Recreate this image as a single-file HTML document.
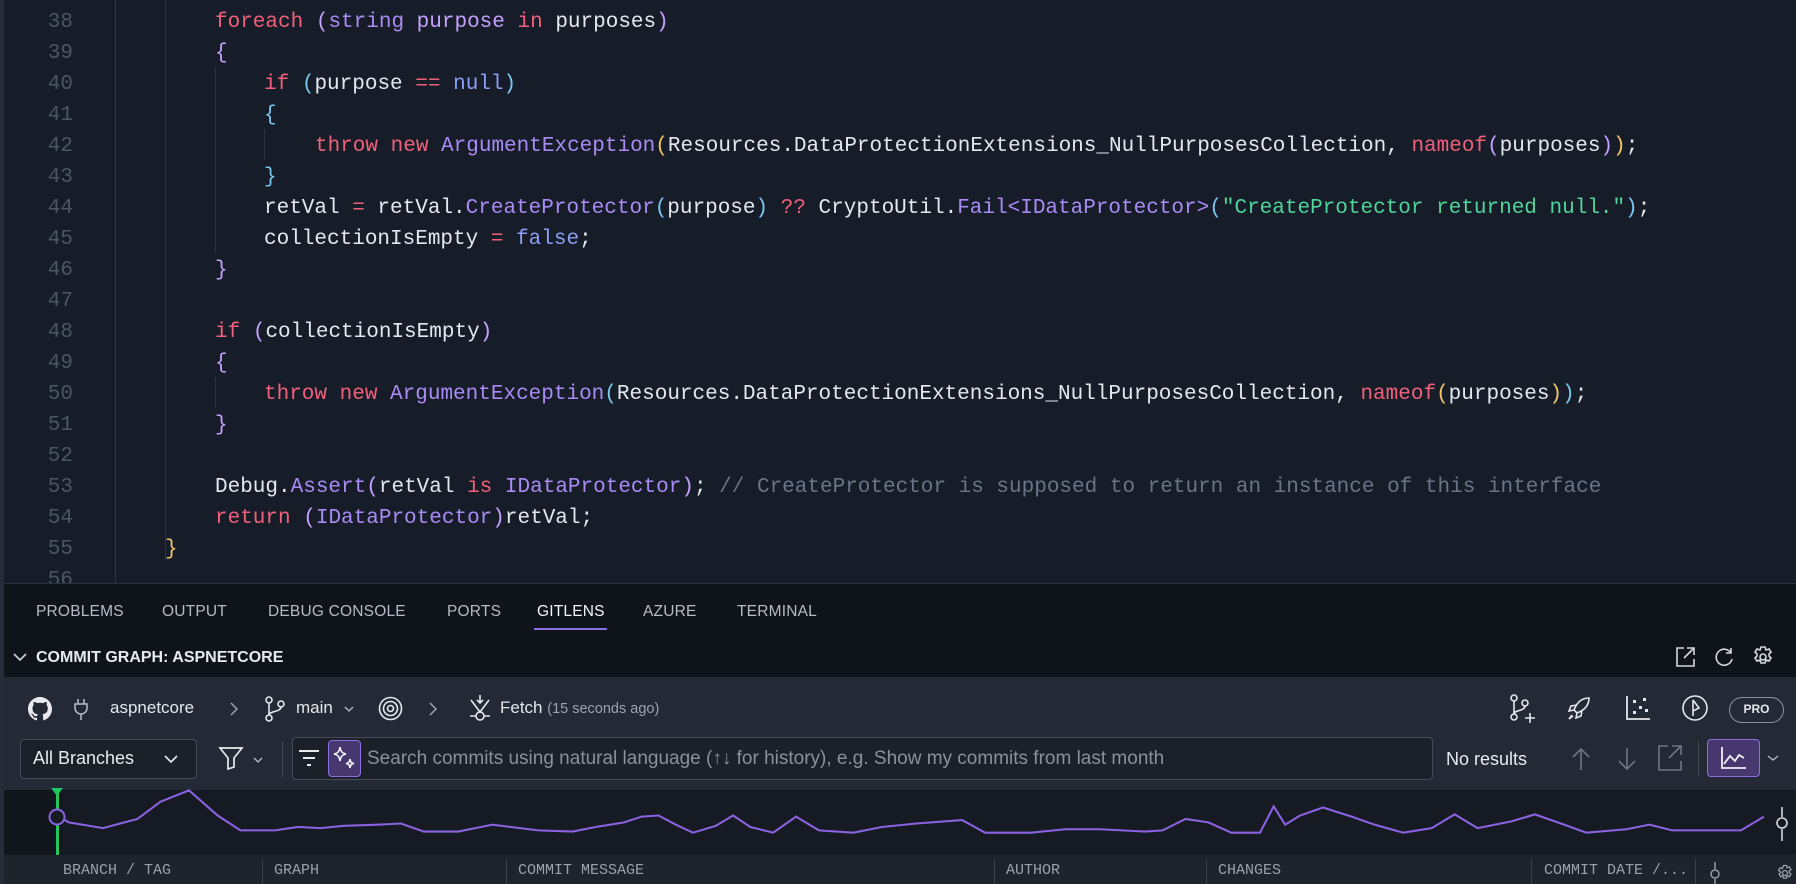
<!DOCTYPE html>
<html><head><meta charset="utf-8"><style>
*{margin:0;padding:0;box-sizing:border-box}
body{width:1796px;height:884px;overflow:hidden;background:#161d28;font-family:"Liberation Sans",sans-serif;position:relative;color:#d4d8e0}
.ed{position:absolute;left:0;top:0;width:1796px;height:584px;background:#161d28;border-left:4px solid #262d38;overflow:hidden}
.ln{position:absolute;left:0;width:73px;text-align:right;font-family:"Liberation Mono",monospace;font-size:21px;color:#4a5566;line-height:31px}
.cd{position:absolute;left:0;font-family:"Liberation Mono",monospace;font-size:21px;line-height:31px;white-space:pre;color:#e4e7ee}
.vl{position:absolute;width:1px;background:#2c3442}
.k{color:#f0607a}.f{color:#a98bf5}.p{color:#c4a0ff}.b{color:#7ac7f0}.n{color:#8c9ff5}.s{color:#4fd49a}.c{color:#6a7487}.y{color:#f2c468}.t{color:#a98bf5}
.abs{position:absolute}
.tab{position:absolute;top:603px;font-size:15.5px;color:#b6bcc6;letter-spacing:0.2px}
svg{overflow:visible}
</style></head><body>
<div class="ed">
<div class="vl" style="left:111px;top:0;height:584px"></div>
<div class="vl" style="left:161px;top:0;height:560px"></div>
<div class="vl" style="left:211px;top:67px;height:186px"></div>
<div class="vl" style="left:260px;top:129px;height:31px"></div>
<div class="vl" style="left:211px;top:377px;height:31px"></div>
</div>
<div id="lines"></div>
<script>
var L=[
["38",'<span class="k">foreach</span> <span class="p">(</span><span class="t">string</span> <span class="p">purpose</span> <span class="k">in</span> purposes<span class="p">)</span>',215],
["39",'<span class="p">{</span>',215],
["40",'<span class="k">if</span> <span class="b">(</span>purpose <span class="k">==</span> <span class="n">null</span><span class="b">)</span>',264],
["41",'<span class="b">{</span>',264],
["42",'<span class="k">throw</span> <span class="k">new</span> <span class="f">ArgumentException</span><span class="y">(</span>Resources.DataProtectionExtensions_NullPurposesCollection, <span class="k">nameof</span><span class="p">(</span>purposes<span class="p">)</span><span class="y">)</span>;',315],
["43",'<span class="b">}</span>',264],
["44",'retVal <span class="k">=</span> retVal.<span class="f">CreateProtector</span><span class="b">(</span>purpose<span class="b">)</span> <span class="k">??</span> CryptoUtil.<span class="f">Fail</span><span class="f">&lt;IDataProtector&gt;</span><span class="b">(</span><span class="s">"CreateProtector returned null."</span><span class="b">)</span>;',264],
["45",'collectionIsEmpty <span class="k">=</span> <span class="n">false</span>;',264],
["46",'<span class="p">}</span>',215],
["47",'',215],
["48",'<span class="k">if</span> <span class="p">(</span>collectionIsEmpty<span class="p">)</span>',215],
["49",'<span class="p">{</span>',215],
["50",'<span class="k">throw</span> <span class="k">new</span> <span class="f">ArgumentException</span><span class="b">(</span>Resources.DataProtectionExtensions_NullPurposesCollection, <span class="k">nameof</span><span class="y">(</span>purposes<span class="y">)</span><span class="b">)</span>;',264],
["51",'<span class="p">}</span>',215],
["52",'',215],
["53",'Debug.<span class="f">Assert</span><span class="p">(</span>retVal <span class="k">is</span> <span class="f">IDataProtector</span><span class="p">)</span>; <span class="c">// CreateProtector is supposed to return an instance of this interface</span>',215],
["54",'<span class="k">return</span> <span class="p">(</span><span class="f">IDataProtector</span><span class="p">)</span>retVal;',215],
["55",'<span class="y">}</span>',165],
["56",'',215]];
var h='';
L.forEach(function(l,i){var t=7+i*31;
h+='<div class="ln" style="top:'+t+'px">'+l[0]+'</div><div class="cd" style="top:'+t+'px;left:'+l[2]+'px">'+l[1]+'</div>';});
document.getElementById('lines').innerHTML=h;
</script>
<div class="abs" style="left:0;top:583px;width:1796px;height:301px;background:#0f141b;border-top:1px solid #2a313c;border-left:4px solid #262d38"></div>
<div class="tab" style="left:36px">PROBLEMS</div>
<div class="tab" style="left:162px">OUTPUT</div>
<div class="tab" style="left:268px">DEBUG CONSOLE</div>
<div class="tab" style="left:447px">PORTS</div>
<div class="tab" style="left:537px;color:#f2f4f7">GITLENS</div>
<div class="abs" style="left:534px;top:628px;width:73px;height:2px;background:#8b6fe0"></div>
<div class="tab" style="left:643px">AZURE</div>
<div class="tab" style="left:737px">TERMINAL</div>
<svg class="abs" style="left:12px;top:651px" width="16" height="12"><path d="M2 3l6 6 6-6" stroke="#d0d4dc" stroke-width="1.6" fill="none"/></svg>
<div class="abs" style="left:36px;top:649px;font-size:16px;font-weight:bold;color:#e8eaef">COMMIT GRAPH: ASPNETCORE</div>
<svg class="abs" style="left:1673px;top:645px" width="24" height="24" fill="none" stroke="#d4d8df" stroke-width="1.6"><path d="M11 3H4v18h17v-7M14 3h7v7M21 3l-10 10"/></svg>
<svg class="abs" style="left:1712px;top:645px" width="24" height="24" fill="none" stroke="#d4d8df" stroke-width="1.6"><path d="M19 8A8 8 0 1 0 20 14M19 3v5h-5"/></svg>
<svg class="abs" style="left:1751px;top:645px" width="24" height="24" fill="none" stroke="#d4d8df" stroke-width="1.6"><circle cx="12" cy="12" r="3"/><path d="M10 2h4l1 3 3-1 2 3-2 2 0 2 2 2-2 3-3-1-1 3h-4l-1-3-3 1-2-3 2-2v-2l-2-2 2-3 3 1z"/></svg>
<div class="abs" style="left:4px;top:677px;width:1792px;height:113px;background:#242a35"></div>
<svg class="abs" style="left:28px;top:697px" width="24" height="24" viewBox="0 0 16 16"><path fill="#e8eaef" d="M8 0C3.6 0 0 3.6 0 8c0 3.5 2.3 6.5 5.5 7.6.4.1.5-.2.5-.4v-1.4c-2.2.5-2.7-1-2.7-1-.4-.9-.9-1.2-.9-1.2-.7-.5.1-.5.1-.5.8.1 1.2.8 1.2.8.7 1.3 1.900.9 2.4.7.1-.5.3-.9.5-1.100-1.800-.2-3.600-.9-3.600-4 0-.9.3-1.600.8-2.100-.1-.2-.4-1 .1-2.100 0 0 .7-.2 2.200.8.6-.2 1.300-.3 2-.3s1.400.1 2 .3c1.500-1 2.200-.8 2.200-.8.4 1.100.2 1.900.1 2.100.5.6.8 1.300.8 2.100 0 3.100-1.900 3.700-3.600 3.900.3.3.5.8.5 1.500v2.200c0 .2.1.5.6.4C13.700 14.500 16 11.500 16 8c0-4.400-3.600-8-8-8z"/></svg>
<svg class="abs" style="left:72px;top:697px" width="18" height="24" fill="none" stroke="#b8bec8" stroke-width="1.5"><path d="M6 2v5M12 2v5M3 7h12v4a6 6 0 0 1-12 0zM9 17v6"/></svg>
<div class="abs" style="left:110px;top:698px;font-size:17px;color:#e4e7ec">aspnetcore</div>
<svg class="abs" style="left:228px;top:700px" width="12" height="18" fill="none" stroke="#9aa1ad" stroke-width="1.5"><path d="M3 3l6 6-6 6"/></svg>
<svg class="abs" style="left:264px;top:695px" width="22" height="28" fill="none" stroke="#e4e7ec" stroke-width="1.6"><circle cx="5" cy="5" r="3"/><circle cx="5" cy="23" r="3"/><circle cx="17" cy="9" r="3"/><path d="M5 8v12M17 12c0 5-12 4-12 8"/></svg>
<div class="abs" style="left:296px;top:698px;font-size:17px;color:#e4e7ec">main</div>
<svg class="abs" style="left:343px;top:705px" width="12" height="8" fill="none" stroke="#b8bec8" stroke-width="1.3"><path d="M2 2l4 4 4-4"/></svg>
<svg class="abs" style="left:378px;top:696px" width="25" height="25" fill="none" stroke="#e4e7ec" stroke-width="1.6"><circle cx="12.5" cy="12.5" r="11"/><circle cx="12.5" cy="12.5" r="7"/><circle cx="12.5" cy="12.5" r="3"/></svg>
<svg class="abs" style="left:427px;top:700px" width="12" height="18" fill="none" stroke="#9aa1ad" stroke-width="1.5"><path d="M3 3l6 6-6 6"/></svg>
<svg class="abs" style="left:467px;top:694px" width="26" height="28" fill="none" stroke="#e4e7ec" stroke-width="1.6"><path d="M13 1v8M10 6l3 3 3-3M4 6l9 12 9-12"/><circle cx="13" cy="22" r="4"/><path d="M3 22h6M17 22h6"/></svg>
<div class="abs" style="left:500px;top:698px;font-size:17px;color:#e4e7ec">Fetch <span style="font-size:14.5px;color:#9ba2ae">(15 seconds ago)</span></div>
<svg class="abs" style="left:1509px;top:694px" width="28" height="30" fill="none" stroke="#e4e7ec" stroke-width="1.6"><circle cx="5" cy="4" r="3"/><circle cx="5" cy="23" r="3"/><circle cx="16" cy="9" r="3"/><path d="M5 7v13M16 12c0 5-11 4-11 8M21 19v10M16 24h10"/></svg>
<svg class="abs" style="left:1566px;top:696px" width="25" height="25" fill="none" stroke="#e4e7ec" stroke-width="1.6"><path d="M23 2c-7 0-12 4-15 12l3 3c8-3 12-8 12-15zM8 14l-5 1 2-5 6-1M11 17l-1 5 5-2 1-6M6 19l-3 4 4-3"/></svg>
<svg class="abs" style="left:1625px;top:695px" width="26" height="26" fill="#e4e7ec"><path d="M2 1v23h23" stroke="#e4e7ec" stroke-width="1.8" fill="none"/><rect x="8" y="5" width="3" height="3"/><rect x="18" y="3" width="3" height="3"/><rect x="14" y="11" width="3" height="3"/><rect x="20" y="14" width="3" height="3"/><rect x="8" y="16" width="3" height="3"/></svg>
<svg class="abs" style="left:1681px;top:694px" width="28" height="28" fill="none" stroke="#e4e7ec" stroke-width="1.6"><circle cx="14" cy="14" r="12"/><path d="M12 6v16M12 6l6 8-6 3"/></svg>
<div class="abs" style="left:1729px;top:697px;width:55px;height:26px;border:1.5px solid #8a919c;border-radius:13px;font-size:12px;font-weight:bold;color:#e4e7ec;text-align:center;line-height:23px">PRO</div>
<div class="abs" style="left:20px;top:739px;width:177px;height:40px;border:1.5px solid #454c58;border-radius:4px;background:#1b2029;font-size:18px;color:#e8eaef;padding:8px 0 0 12px">All Branches</div>
<svg class="abs" style="left:163px;top:753px" width="16" height="12" fill="none" stroke="#e8eaef" stroke-width="1.6"><path d="M2 3l6 6 6-6"/></svg>
<svg class="abs" style="left:218px;top:746px" width="26" height="24" fill="none" stroke="#e8eaef" stroke-width="1.7"><path d="M2 2h22l-8 10v9l-6 2v-11z"/></svg>
<svg class="abs" style="left:253px;top:756px" width="11" height="8" fill="none" stroke="#b8bec8" stroke-width="1.3"><path d="M1 2l4 4 4-4"/></svg>
<div class="abs" style="left:282px;top:741px;width:1px;height:36px;background:#454c58"></div>
<div class="abs" style="left:292px;top:737px;width:1141px;height:43px;border:1.5px solid #454c58;border-radius:4px;background:#1b2029"></div>
<svg class="abs" style="left:298px;top:749px" width="22" height="18" stroke="#e8eaef" stroke-width="2"><path d="M1 2h20M5 9h12M9 16h4"/></svg>
<div class="abs" style="left:328px;top:740px;width:33px;height:37px;border:1.5px solid #8b6fe0;border-radius:4px;background:#46386e"></div>
<svg class="abs" style="left:331px;top:744px" width="28" height="30" fill="none" stroke="#f0f0f6" stroke-width="1.6"><path d="M9 3c1 5 2 6 6 7-4 1-5 2-6 7-1-5-2-6-6-7 4-1 5-2 6-7zM19 15c.5 3 1 4 4 4.5-3 .5-3.5 1.5-4 4.5-.5-3-1-4-4-4.5 3-.5 3.5-1.5 4-4.5z"/></svg>
<div class="abs" style="left:367px;top:748px;font-size:19px;color:#8a919c">Search commits using natural language (↑↓ for history), e.g. Show my commits from last month</div>
<div class="abs" style="left:1446px;top:749px;font-size:18px;color:#e8eaef">No results</div>
<svg class="abs" style="left:1571px;top:746px" width="20" height="26" fill="none" stroke="#6e7580" stroke-width="1.6"><path d="M10 24V3M2 11l8-8 8 8"/></svg>
<svg class="abs" style="left:1617px;top:746px" width="20" height="26" fill="none" stroke="#6e7580" stroke-width="1.6"><path d="M10 2v21M2 15l8 8 8-8"/></svg>
<svg class="abs" style="left:1657px;top:744px" width="26" height="28" fill="none" stroke="#6e7580" stroke-width="1.6"><path d="M11 2H2v24h22v-9M15 2h9v9M24 2L12 14"/></svg>
<div class="abs" style="left:1698px;top:742px;width:1px;height:34px;background:#454c58"></div>
<div class="abs" style="left:1707px;top:739px;width:53px;height:38px;border:1.5px solid #8b6fe0;border-radius:4px;background:#46386e"></div>
<svg class="abs" style="left:1720px;top:746px" width="28" height="24" fill="none" stroke="#f0f0f6" stroke-width="1.8"><path d="M2 1v21h24M4 18l6-8 5 5 4-6 5 3"/></svg>
<svg class="abs" style="left:1767px;top:754px" width="12" height="8" fill="none" stroke="#b8bec8" stroke-width="1.3"><path d="M1 2l5 4 5-4"/></svg>
<div class="abs" style="left:4px;top:790px;width:1792px;height:65px;background:#151a23"></div>
<div class="abs" style="left:4px;top:790px;width:58px;height:65px;background:#11151c"></div>
<div class="abs" style="left:56px;top:790px;width:3px;height:65px;background:#22c55e"></div>
<svg class="abs" style="left:51px;top:788px" width="12" height="8"><path d="M0 0h12L6 8z" fill="#22c55e"/></svg>
<svg class="abs" style="left:0;top:0" width="1796" height="884" viewBox="0 0 1568 771.8" preserveAspectRatio="none">
<polyline fill="none" stroke="#8b62e0" stroke-width="1.8" points="52,713 60,718 90,723 120,715 140,700 165,690 190,712 210,725 240,725 260,722 280,723 300,721 330,720 350,719 370,726 400,726 430,720 470,725 500,726 520,722 545,718 560,713 575,712 590,720 605,727 625,721 640,712 655,722 675,727 695,713 715,725 745,727 770,722 800,719 840,716 860,727 900,727 930,724 960,724 1000,726 1015,725 1035,715 1055,718 1075,727 1100,727 1112,704 1122,720 1135,712 1155,705 1180,713 1200,720 1225,727 1250,723 1270,711 1290,723 1320,717 1340,711 1360,718 1385,727 1420,724 1440,720 1460,725 1490,725 1520,725 1540,713"/>
</svg>
<svg class="abs" style="left:48px;top:808px" width="18" height="18"><circle cx="9" cy="9" r="7.5" fill="#151a23" stroke="#8b62e0" stroke-width="2"/></svg>
<svg class="abs" style="left:1775px;top:807px" width="14" height="36" fill="none" stroke="#d4d8df" stroke-width="1.6"><path d="M7 0v10M7 22v12"/><circle cx="7" cy="16" r="5"/></svg>
<div class="abs" style="left:4px;top:855px;width:1792px;height:29px;background:#1e232c"></div>
<div class="abs" style="top:862px;left:63px;font-family:'Liberation Mono',monospace;font-size:15px;color:#9aa1ad">BRANCH / TAG</div>
<div class="abs" style="left:262px;top:859px;width:1px;height:25px;background:#3a414c"></div>
<div class="abs" style="top:862px;left:274px;font-family:'Liberation Mono',monospace;font-size:15px;color:#9aa1ad">GRAPH</div>
<div class="abs" style="left:506px;top:859px;width:1px;height:25px;background:#3a414c"></div>
<div class="abs" style="top:862px;left:518px;font-family:'Liberation Mono',monospace;font-size:15px;color:#9aa1ad">COMMIT MESSAGE</div>
<div class="abs" style="left:994px;top:859px;width:1px;height:25px;background:#3a414c"></div>
<div class="abs" style="top:862px;left:1006px;font-family:'Liberation Mono',monospace;font-size:15px;color:#9aa1ad">AUTHOR</div>
<div class="abs" style="left:1206px;top:859px;width:1px;height:25px;background:#3a414c"></div>
<div class="abs" style="top:862px;left:1218px;font-family:'Liberation Mono',monospace;font-size:15px;color:#9aa1ad">CHANGES</div>
<div class="abs" style="left:1531px;top:859px;width:1px;height:25px;background:#3a414c"></div>
<div class="abs" style="top:862px;left:1544px;font-family:'Liberation Mono',monospace;font-size:15px;color:#9aa1ad">COMMIT DATE /...</div>
<div class="abs" style="left:1695px;top:859px;width:1px;height:25px;background:#3a414c"></div>
<svg class="abs" style="left:1709px;top:862px" width="12" height="22" fill="none" stroke="#9aa1ad" stroke-width="1.4"><path d="M6 0v7M6 17v5"/><circle cx="6" cy="12" r="4"/></svg>
<svg class="abs" style="left:1776px;top:864px" width="18" height="18" fill="none" stroke="#9aa1ad" stroke-width="1.3"><circle cx="9" cy="9" r="2.5"/><path d="M7.5 1.5h3l.7 2.2 2.2-.8 1.5 2.6-1.5 1.5v1.6l1.5 1.5-1.5 2.6-2.2-.8-.7 2.2h-3l-.7-2.2-2.2.8-1.5-2.6 1.5-1.5V7.9L2.6 6.4l1.5-2.6 2.2.8z"/></svg>
</body></html>
